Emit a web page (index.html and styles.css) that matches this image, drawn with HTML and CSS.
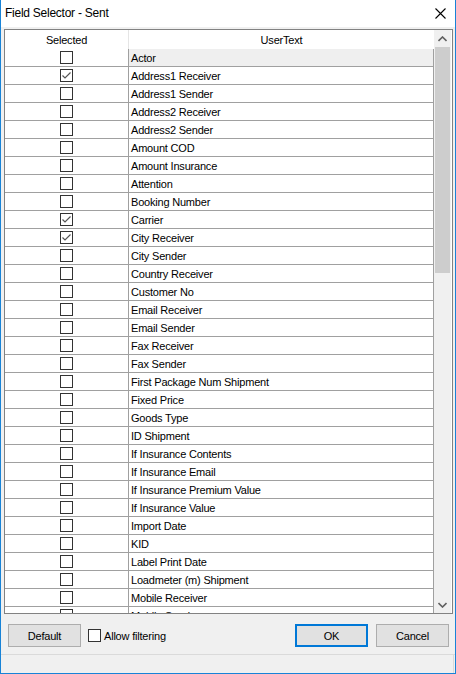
FILE: index.html
```html
<!doctype html>
<html>
 <head>
	<meta charset="UTF-8">
	<title>Field Selector - Sent</title>
	<link rel="stylesheet" href="styles.css">
 </head>
 <body>
	<div class="window">
		<div class="titlebar">
			<span class="title">Field Selector - Sent</span>
			<svg class="close" width="11" height="11" viewBox="0 0 11 11"><path d="M0.5 0.5L10.5 10.5M10.5 0.5L0.5 10.5" stroke="#000" stroke-width="1.1" fill="none"/></svg>
		</div>
		<div class="content">
			<div class="grid">
				<div class="table">
					<div class="head">
						<div class="c1">Selected</div>
						<div class="c2">UserText</div>
					</div>
					<div class="rows">
						<div class="row cur"><div class="c1"><span class="cb"></span></div><div class="c2">Actor</div></div>
						<div class="row"><div class="c1"><span class="cb on"><svg width="11" height="11" viewBox="0 0 11 11"><path d="M1.5 5.5L4 8L9.5 2.5" stroke="#555" stroke-width="1.2" fill="none"/></svg></span></div><div class="c2">Address1 Receiver</div></div>
						<div class="row"><div class="c1"><span class="cb"></span></div><div class="c2">Address1 Sender</div></div>
						<div class="row"><div class="c1"><span class="cb"></span></div><div class="c2">Address2 Receiver</div></div>
						<div class="row"><div class="c1"><span class="cb"></span></div><div class="c2">Address2 Sender</div></div>
						<div class="row"><div class="c1"><span class="cb"></span></div><div class="c2">Amount COD</div></div>
						<div class="row"><div class="c1"><span class="cb"></span></div><div class="c2">Amount Insurance</div></div>
						<div class="row"><div class="c1"><span class="cb"></span></div><div class="c2">Attention</div></div>
						<div class="row"><div class="c1"><span class="cb"></span></div><div class="c2">Booking Number</div></div>
						<div class="row"><div class="c1"><span class="cb on"><svg width="11" height="11" viewBox="0 0 11 11"><path d="M1.5 5.5L4 8L9.5 2.5" stroke="#555" stroke-width="1.2" fill="none"/></svg></span></div><div class="c2">Carrier</div></div>
						<div class="row"><div class="c1"><span class="cb on"><svg width="11" height="11" viewBox="0 0 11 11"><path d="M1.5 5.5L4 8L9.5 2.5" stroke="#555" stroke-width="1.2" fill="none"/></svg></span></div><div class="c2">City Receiver</div></div>
						<div class="row"><div class="c1"><span class="cb"></span></div><div class="c2">City Sender</div></div>
						<div class="row"><div class="c1"><span class="cb"></span></div><div class="c2">Country Receiver</div></div>
						<div class="row"><div class="c1"><span class="cb"></span></div><div class="c2">Customer No</div></div>
						<div class="row"><div class="c1"><span class="cb"></span></div><div class="c2">Email Receiver</div></div>
						<div class="row"><div class="c1"><span class="cb"></span></div><div class="c2">Email Sender</div></div>
						<div class="row"><div class="c1"><span class="cb"></span></div><div class="c2">Fax Receiver</div></div>
						<div class="row"><div class="c1"><span class="cb"></span></div><div class="c2">Fax Sender</div></div>
						<div class="row"><div class="c1"><span class="cb"></span></div><div class="c2">First Package Num Shipment</div></div>
						<div class="row"><div class="c1"><span class="cb"></span></div><div class="c2">Fixed Price</div></div>
						<div class="row"><div class="c1"><span class="cb"></span></div><div class="c2">Goods Type</div></div>
						<div class="row"><div class="c1"><span class="cb"></span></div><div class="c2">ID Shipment</div></div>
						<div class="row"><div class="c1"><span class="cb"></span></div><div class="c2">If Insurance Contents</div></div>
						<div class="row"><div class="c1"><span class="cb"></span></div><div class="c2">If Insurance Email</div></div>
						<div class="row"><div class="c1"><span class="cb"></span></div><div class="c2">If Insurance Premium Value</div></div>
						<div class="row"><div class="c1"><span class="cb"></span></div><div class="c2">If Insurance Value</div></div>
						<div class="row"><div class="c1"><span class="cb"></span></div><div class="c2">Import Date</div></div>
						<div class="row"><div class="c1"><span class="cb"></span></div><div class="c2">KID</div></div>
						<div class="row"><div class="c1"><span class="cb"></span></div><div class="c2">Label Print Date</div></div>
						<div class="row"><div class="c1"><span class="cb"></span></div><div class="c2">Loadmeter (m) Shipment</div></div>
						<div class="row"><div class="c1"><span class="cb"></span></div><div class="c2">Mobile Receiver</div></div>
						<div class="row"><div class="c1"><span class="cb"></span></div><div class="c2">Mobile Sender</div></div>
					</div>
				</div>
				<div class="vscroll">
					<div class="arrow">
						<svg width="9" height="6" viewBox="0 0 9 6"><path d="M0.5 5L4.5 1L8.5 5" stroke="#606060" stroke-width="1.6" fill="none"/></svg>
					</div>
					<div class="track"><div class="thumb"></div></div>
					<div class="arrow">
						<svg width="9" height="6" viewBox="0 0 9 6"><path d="M0.5 1L4.5 5L8.5 1" stroke="#606060" stroke-width="1.6" fill="none"/></svg>
					</div>
				</div>
			</div>
			<div class="buttons">
				<button class="btn">Default</button>
				<label class="chk"><span class="cb"></span>Allow filtering</label>
				<span class="spacer"></span>
				<button class="btn ok">OK</button>
				<button class="btn">Cancel</button>
			</div>
		</div>
		<div class="statusbar"><div class="grip"></div></div>
	</div>
 </body>
</html>
```

FILE: styles.css
```css
*{box-sizing:border-box}
body{margin:0;background:#fff;font-family:"Liberation Sans",Arial,sans-serif;font-size:11px;color:#000}
.window{
	width:456px;height:674px;
	border:1px solid #1883d7;border-top:none;
	display:flex;flex-direction:column;
	background:#f0f0f0;
}
/* title bar */
.titlebar{
	height:27px;background:#fff;
	display:flex;align-items:center;
	padding-left:4px;
}
.title{font-size:12px;letter-spacing:-0.25px;flex:1;margin-top:-1px}
.close{margin-right:9px;margin-top:-1px}

.content{height:627px;padding:2px 2px 0 3px;display:flex;flex-direction:column}
/* the grid */
.grid{
	height:585px;border:1px solid #828282;background:#fff;
	display:flex;overflow:hidden;
}
.table{width:429px;display:flex;flex-direction:column;overflow:hidden}
.head{display:flex;height:19px;flex:none}
.head .c1,.head .c2{display:flex;align-items:center;justify-content:center;letter-spacing:-0.2px}
.head .c1{width:123px}
.head .c2{width:306px;border-left:1px solid #e5e5e5}
.rows{flex:1;overflow:hidden}
.row{display:flex;height:18px;border-bottom:1px solid #a0a0a0}
.row .c1{width:123px;display:flex;align-items:center;justify-content:center}
.row .c2{
	width:306px;border-left:1px solid #a0a0a0;border-right:1px solid #a0a0a0;
	padding-left:2px;display:flex;align-items:center;letter-spacing:-0.2px;
	white-space:nowrap;
}
.row.cur .c2{background:#efefef}
.cb{
	width:13px;height:13px;border:1px solid #333;background:#fff;
	display:inline-flex;align-items:center;justify-content:center;flex:none;
}
/* scroll bar */
.vscroll{width:17px;background:#f0f0f0;display:flex;flex-direction:column}
.arrow{height:17px;display:flex;align-items:center;justify-content:center;flex:none}
.track{flex:1;padding:0 1px}
.thumb{height:226px;background:#cdcdcd}

/* bottom buttons */
.buttons{display:flex;align-items:center;margin-top:10px;height:23px;padding-left:4px;padding-right:4px}
.btn{
	width:73px;height:23px;border:1px solid #adadad;background:#e1e1e1;
	font-family:"Liberation Sans",Arial,sans-serif;font-size:11px;color:#000;
	padding:0;letter-spacing:-0.2px;
}
.btn.ok{border:2px solid #0078d7;margin-right:8px}
.chk{display:flex;align-items:center;margin-left:7px;letter-spacing:-0.2px}
.chk .cb{margin-right:3px}
.spacer{flex:1}
.statusbar{height:19px;border-top:1px solid #dadada;display:flex;justify-content:flex-end}
.grip{width:2px;border-left:1px solid #dadada}
```
